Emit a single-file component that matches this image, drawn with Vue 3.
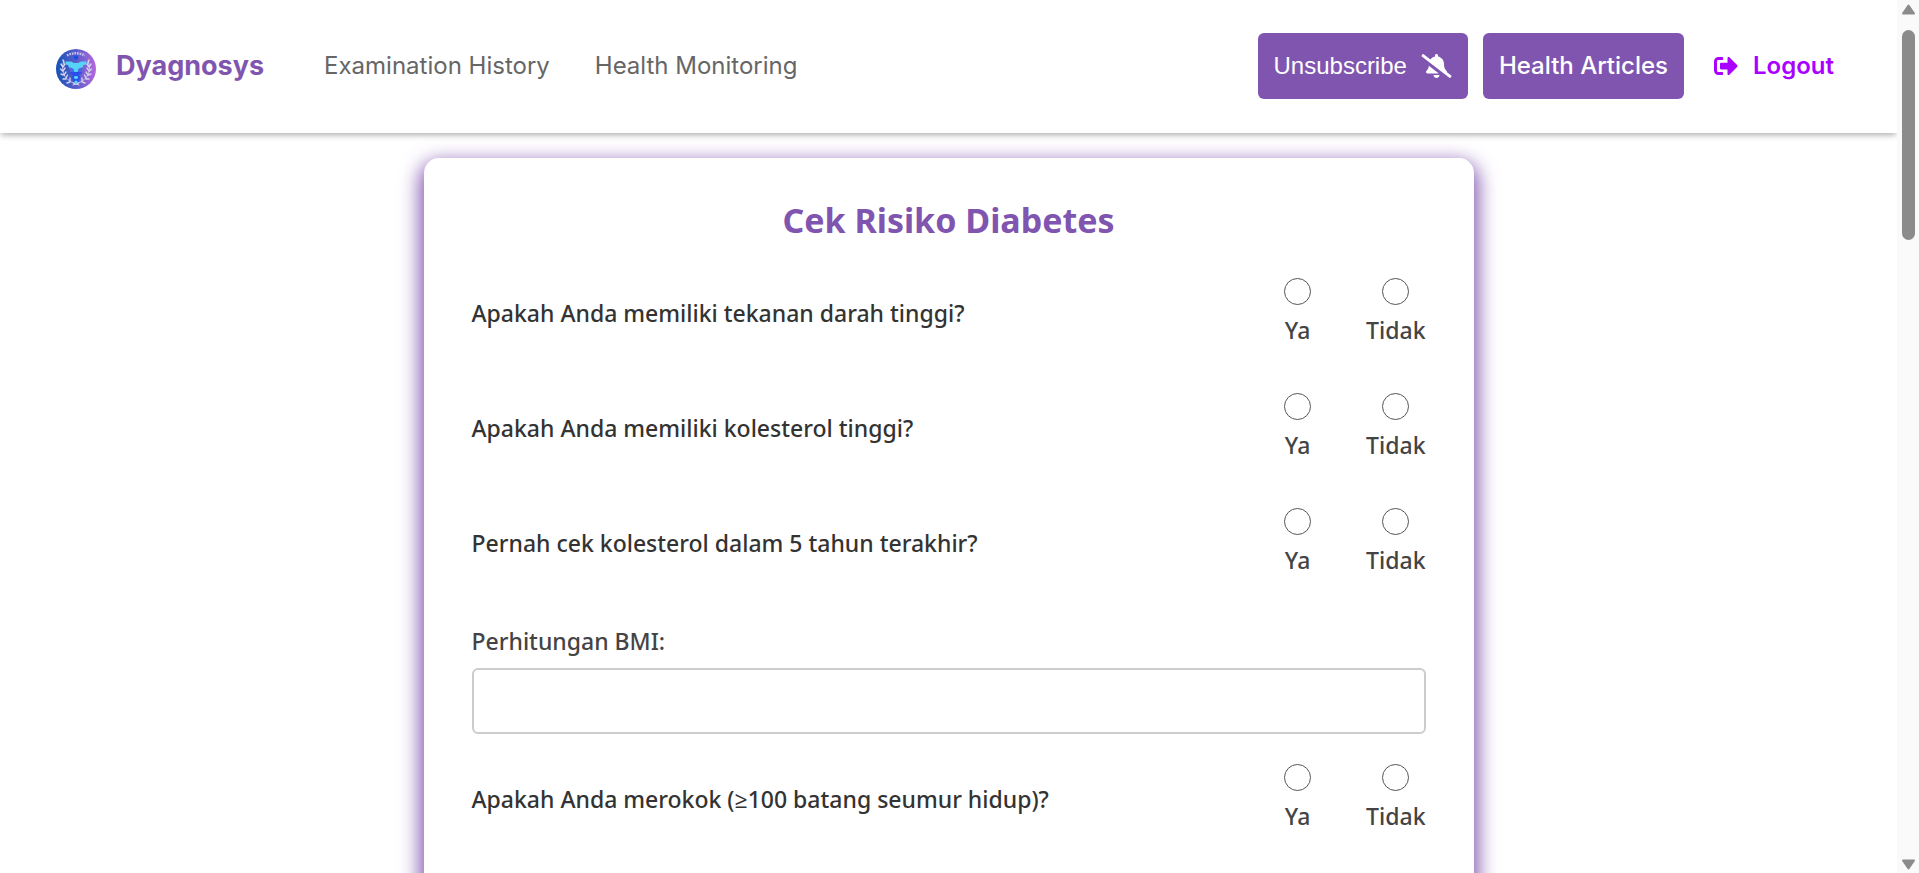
<script setup>
import { reactive, ref } from 'vue'

const beforeBmi = [
  { id: 'tekanan', text: 'Apakah Anda memiliki tekanan darah tinggi?' },
  { id: 'kolesterol', text: 'Apakah Anda memiliki kolesterol tinggi?' },
  { id: 'cek', text: 'Pernah cek kolesterol dalam 5 tahun terakhir?' },
]
const afterBmi = [
  { id: 'merokok', text: 'Apakah Anda merokok (≥100 batang seumur hidup)?' },
]
const options = ['Ya', 'Tidak']
const answers = reactive({})
const bmi = ref('')
</script>

<template>
  <div class="window">
    <div class="page">
      <header class="topbar">
        <a class="brand" href="#">
          <svg class="logo" viewBox="0 0 40 40" aria-hidden="true">
            <defs>
              <linearGradient id="disc" x1="0" y1="0" x2="1" y2="0">
                <stop offset="0" stop-color="#1453b4" />
                <stop offset="0.5" stop-color="#5a5ccb" />
                <stop offset="1" stop-color="#b768dc" />
              </linearGradient>
            </defs>
            <circle cx="20" cy="20" r="20" fill="url(#disc)" />
            <path d="M11 6.500Q20 2 29 6.500" fill="none" stroke="#c9c4ee" stroke-width="2.400" stroke-dasharray="1.600 1" />
            <g fill="none" stroke="#d3d3ee" stroke-linecap="round">
              <path d="M8 12C4 21 8 31 18 34M32 12c4 9 0 19-10 22" stroke-width="0.800" />
              <path d="M8 14l-1-3M7 18l-2-3M6.500 22l-2-2M7.500 26l-2.500-1M10 30l-3 0M14 33l-3 1M7 18l2-3M7 22l2-3M8 26l2-3M10 29l1.500-3M14 32l0-3" stroke-width="1.400" />
              <path d="M32 14l1-3M33 18l2-3M33.500 22l2-2M32.500 26l2.500-1M30 30l3 0M26 33l3 1M33 18l-2-3M33 22l-2-3M32 26l-2-3M30 29l-1.500-3M26 32l0-3" stroke-width="1.400" />
              <path d="M17 36l6-2M23 36l-6-2" stroke-width="1" />
            </g>
            <path d="M13 19h14l-2 6h-10z" fill="#4d6be0" />
            <path d="M9.500 12.500h5.500l3 1.500h4l3-1.500h5.500v3l-3 .5-1 2.500-3 .5-1.500 1.500v13h-4v-13L16 19l-3-.5-1-2.500-2.500-.5z" fill="#55d4f7" />
            <path d="M16.500 23.500c0 3 7 2 7 5s-6 2-6 4.500M23.500 23.500c0 3-7 2-7 5s6 2 6 4.500" fill="none" stroke="#2450f0" stroke-width="1.800" />
            <path d="M14.500 24h11" stroke="#2c4dec" stroke-width="2.200" />
            <circle cx="20" cy="8.500" r="2.200" fill="#1750df" />
            <circle cx="20" cy="33" r="1.500" fill="#55d4f7" />
          </svg>
          <span>Dyagnosys</span>
        </a>
        <nav class="links">
          <a href="#">Examination History</a>
          <a href="#">Health Monitoring</a>
        </nav>
        <div class="actions">
          <button type="button" class="btn subscribe">
            Unsubscribe
            <svg class="bell" viewBox="0 0 640 512" aria-hidden="true">
              <path fill="currentColor" d="M633.82 458.1l-90.62-70.05c.19-1.38.8-2.66.8-4.06.05-7.55-2.61-15.27-8.61-21.71-19.32-20.76-55.47-51.99-55.47-154.29 0-77.7-54.48-139.9-127.94-155.16V32c0-17.67-14.32-32-31.98-32s-31.98 14.33-31.98 32v20.84c-40.33 8.38-74.66 31.07-97.59 62.57L45.47 3.37C38.49-2.05 28.43-.8 23.01 6.18L3.37 31.45C-2.05 38.42-.8 48.47 6.18 53.9l588.35 454.73c6.98 5.43 17.03 4.17 22.46-2.81l19.64-25.27c5.42-6.97 4.17-17.02-2.81-22.45zM157.23 251.54c-8.61 67.96-36.41 93.33-52.62 110.75-6 6.45-8.66 14.16-8.61 21.71.11 16.4 12.98 32 32.1 32h241.92L157.23 251.54zM320 512c35.32 0 63.97-28.65 63.97-64H256.03c0 35.35 28.65 64 63.97 64z" />
            </svg>
          </button>
          <a class="btn" href="#">Health Articles</a>
          <a class="logout" href="#">
            <svg class="exit" viewBox="0 0 512 512" aria-hidden="true">
              <path fill="currentColor" d="M497 273L329 441c-15 15-41 4.5-41-17v-96H152c-13.3 0-24-10.7-24-24v-96c0-13.3 10.7-24 24-24h136V88c0-21.4 25.9-32 41-17l168 168c9.3 9.4 9.3 24.6 0 34zM192 436v-40c0-6.6-5.4-12-12-12H96c-17.7 0-32-14.3-32-32V160c0-17.7 14.3-32 32-32h84c6.6 0 12-5.4 12-12V76c0-6.6-5.4-12-12-12H96c-53 0-96 43-96 96v192c0 53 43 96 96 96h84c6.6 0 12-5.4 12-12z" />
            </svg>
            Logout
          </a>
        </div>
      </header>

      <main class="main">
        <form class="card" @submit.prevent>
          <h1>Cek Risiko Diabetes</h1>
          <div v-for="q in beforeBmi" :key="q.id" class="question" role="radiogroup" :aria-labelledby="q.id">
            <p :id="q.id">{{ q.text }}</p>
            <label v-for="o in options" :key="o" class="option">
              <input v-model="answers[q.id]" type="radio" :name="q.id + '-answer'" :value="o" />
              <span>{{ o }}</span>
            </label>
          </div>
          <div class="field">
            <label for="bmi">Perhitungan BMI:</label>
            <input id="bmi" v-model="bmi" type="text" />
          </div>
          <div v-for="q in afterBmi" :key="q.id" class="question" role="radiogroup" :aria-labelledby="q.id">
            <p :id="q.id">{{ q.text }}</p>
            <label v-for="o in options" :key="o" class="option">
              <input v-model="answers[q.id]" type="radio" :name="q.id + '-answer'" :value="o" />
              <span>{{ o }}</span>
            </label>
          </div>
        </form>
      </main>
    </div>

    <div class="scrollbar" aria-hidden="true">
      <svg class="arrow" viewBox="0 0 14 11"><path d="M7 1.500L12.500 9.500H1.500z" /></svg>
      <div class="track"><div class="thumb"></div></div>
      <svg class="arrow" viewBox="0 0 14 11"><path d="M7 9.500L1.500 1.500h11z" /></svg>
    </div>
  </div>
</template>

<style>
body {
  margin: 0;
  background: #fff;
}
</style>

<style scoped>
* {
  box-sizing: border-box;
}
.window {
  display: flex;
  height: 100vh;
  font-family: 'Noto Sans', 'Open Sans', sans-serif;
  font-size: 23px;
  line-height: 36px;
}
.page {
  flex: 1;
  min-width: 0;
  overflow-x: hidden;
  overflow-y: auto;
  scrollbar-width: none;
}
a {
  text-decoration: none;
}
.topbar {
  position: relative;
  display: flex;
  align-items: center;
  padding: 33px 63px 34px 56px;
  background: #fff;
  box-shadow: 0 3px 6px -1px rgba(0, 0, 0, 0.32);
  font-family: Inter, sans-serif;
  font-size: 24px;
}
.brand {
  display: flex;
  align-items: flex-end;
  gap: 20px;
  color: #8055b0;
  font-size: 27px;
  font-weight: 700;
  line-height: 46px;
}
.logo {
  width: 40px;
  height: 40px;
}
.links {
  display: flex;
  gap: 45px;
  margin-left: 60px;
}
.links a {
  color: #666;
}
.actions {
  display: flex;
  align-items: center;
  gap: 15px;
  margin-left: auto;
}
.btn {
  display: flex;
  align-items: center;
  gap: 14px;
  padding: 15px 16px;
  border: 0;
  border-radius: 6px;
  background: #8055b0;
  color: #fff;
  font-weight: 500;
  line-height: 36px;
}
.subscribe {
  font-family: 'Liberation Sans', Arial, sans-serif;
  font-size: 24px;
  font-weight: 400;
}
.bell {
  width: 31px;
  height: 24px;
}
.logout {
  display: flex;
  align-items: center;
  gap: 15px;
  margin-left: 15px;
  color: #a0f;
  font-weight: 600;
}
.exit {
  width: 24px;
  height: 24px;
}
.main {
  padding: 25px 24px 0;
}
.card {
  max-width: 1050px;
  margin: 0 auto;
  padding: 35px 48px 96px;
  border-radius: 15px;
  background: #fff;
  box-shadow: 0 8px 20px 4px #8055b0;
}
h1 {
  margin: 0 0 31px;
  color: #8055b0;
  font-size: 34px;
  font-weight: 700;
  line-height: 54px;
  text-align: center;
}
.question {
  display: flex;
  align-items: center;
  gap: 55px;
  margin-bottom: 45px;
}
.question p {
  flex: 1;
  margin: 0;
  color: #333;
  font-weight: 500;
}
.option {
  display: flex;
  flex-direction: column;
  align-items: center;
  gap: 7px;
  color: #444;
  font-weight: 500;
}
.option input {
  appearance: none;
  width: 27px;
  height: 27px;
  margin: 0;
  border: 1px solid #555;
  border-radius: 50%;
  background: #fff;
}
.option input:checked {
  border: 7px solid #8055b0;
}
.field {
  display: flex;
  flex-direction: column;
  gap: 9px;
  margin-bottom: 30px;
}
.field label {
  color: #444;
  font-weight: 500;
}
.field input {
  width: 100%;
  height: 66px;
  padding: 12px;
  border: 2px solid #ccc;
  border-radius: 6px;
  background: #fff;
  font: inherit;
}
.scrollbar {
  display: flex;
  flex-direction: column;
  align-items: center;
  gap: 15px;
  width: 22px;
  padding: 4px 0 3px;
  background: #fafafa;
}
.arrow {
  width: 15px;
  height: 11px;
  fill: #8b8b8b;
  stroke: #8b8b8b;
  stroke-width: 2;
  stroke-linejoin: round;
}
.track {
  flex: 1;
}
.thumb {
  width: 13px;
  height: 210px;
  border-radius: 7px;
  background: #8b8b8b;
}
</style>
